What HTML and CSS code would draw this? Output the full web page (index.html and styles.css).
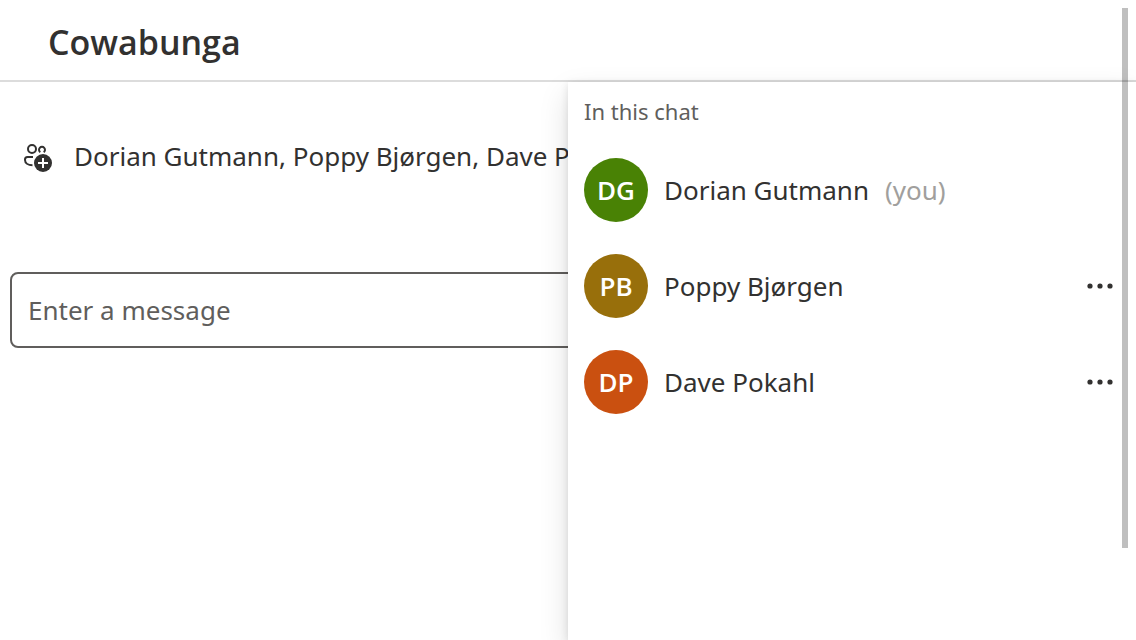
FILE: index.html
```
<!DOCTYPE html>
<html lang="en">
<head>
<meta charset="utf-8">
<meta name="viewport" content="width=device-width, initial-scale=1">
<title>Cowabunga</title>
<link rel="stylesheet" href="styles.css">
</head>
<body>
<div class="app">
  <header class="header">
    <h1 class="title">Cowabunga</h1>
  </header>
  <div class="body">
    <main class="chat">
      <div class="notice">
        <svg class="notice-icon" viewBox="0 0 28 28" aria-hidden="true">
          <g fill="none" stroke="#323130" stroke-width="2">
            <circle cx="8" cy="5" r="4"/>
            <path d="M16.300 8.300A3 3 0 1 1 19.700 8.300"/>
            <path d="M9 13H3.500A2.500 2.500 0 0 0 1 15.500V16C1 19 4 21.200 8.500 21.200"/>
          </g>
          <circle cx="19" cy="19" r="9" fill="#323130"/>
          <path d="M19 14V24M14 19H24" fill="none" stroke="#fff" stroke-width="2"/>
        </svg>
        <p class="notice-text">Dorian Gutmann, Poppy Bjørgen, Dave Pokahl</p>
      </div>
      <form class="composer">
        <input class="message" type="text" placeholder="Enter a message" aria-label="Enter a message">
      </form>
    </main>
    <aside class="people" aria-label="In this chat">
      <h2 class="people-title">In this chat</h2>
      <ul class="list">
        <li class="person">
          <span class="avatar green">DG</span>
          <span class="name">Dorian Gutmann</span>
          <span class="you">(you)</span>
        </li>
        <li class="person">
          <span class="avatar gold">PB</span>
          <span class="name">Poppy Bjørgen</span>
          <button class="more" type="button" aria-label="More options for Poppy Bjørgen">
            <svg class="dots" viewBox="0 0 28 6" aria-hidden="true"><circle cx="4" cy="3" r="2.6"/><circle cx="14" cy="3" r="2.6"/><circle cx="24" cy="3" r="2.6"/></svg>
          </button>
        </li>
        <li class="person">
          <span class="avatar orange">DP</span>
          <span class="name">Dave Pokahl</span>
          <button class="more" type="button" aria-label="More options for Dave Pokahl">
            <svg class="dots" viewBox="0 0 28 6" aria-hidden="true"><circle cx="4" cy="3" r="2.6"/><circle cx="14" cy="3" r="2.6"/><circle cx="24" cy="3" r="2.6"/></svg>
          </button>
        </li>
      </ul>
    </aside>
  </div>
  <div class="scrollbar"></div>
</div>
</body>
</html>
```
FILE: styles.css
```
* {
  box-sizing: border-box;
}

body {
  margin: 0;
  background: #fff;
  color: #323130;
  font-family: "Segoe UI", "Noto Sans", "Open Sans", sans-serif;
  font-size: 26px;
  line-height: 36px;
}

.app {
  position: relative;
  display: flex;
  flex-direction: column;
  min-height: 100vh;
  overflow: hidden;
}

.header {
  padding: 18px 48px 14px;
  border-bottom: 2px solid #dcdcdc;
}

.title {
  margin: 0;
  font-family: "Segoe UI", "Open Sans", sans-serif;
  font-size: 34px;
  line-height: 48px;
  font-weight: 600;
}

.body {
  position: relative;
  flex: 1;
}

.chat {
  display: flex;
  flex-direction: column;
  gap: 98px;
  padding: 56px 10px;
}

.notice {
  display: flex;
  align-items: flex-end;
  gap: 22px;
  padding-left: 14px;
}

.notice-icon {
  flex: none;
  width: 28px;
  height: 28px;
  margin-bottom: 2px;
}

.notice-text {
  margin: 0;
  white-space: nowrap;
}

.message {
  display: block;
  width: 100%;
  height: 76px;
  padding: 0 16px;
  border: 2px solid #605e5c;
  border-radius: 8px;
  background: #fff;
  color: #323130;
  font: inherit;
}

.message::placeholder {
  color: #605e5c;
  opacity: 1;
}

.people {
  position: absolute;
  inset: 0 0 0 50%;
  background: #fff;
  box-shadow: 0 12px 28px rgba(0, 0, 0, 0.13), 0 2px 8px rgba(0, 0, 0, 0.11);
}

.people-title {
  margin: 0;
  padding: 11px 16px 13px;
  color: #605e5c;
  font-size: 22px;
  line-height: 36px;
  font-weight: 400;
}

.list {
  margin: 0;
  padding: 0;
  list-style: none;
}

.person {
  display: flex;
  align-items: center;
  gap: 16px;
  height: 96px;
  padding: 0 16px;
}

.avatar {
  flex: none;
  width: 64px;
  height: 64px;
  border-radius: 50%;
  color: #fff;
  font-family: "Segoe UI", "Open Sans", sans-serif;
  font-weight: 600;
  line-height: 64px;
  text-align: center;
}

.green {
  background: #498205;
}

.gold {
  background: #986f0b;
}

.orange {
  background: #ca5010;
}

.you {
  color: #a19f9d;
}

.more {
  display: flex;
  margin-left: auto;
  margin-right: 6px;
  padding: 16px 0;
  border: 0;
  background: none;
}

.dots {
  width: 28px;
  height: 6px;
  fill: #323130;
}

.scrollbar {
  position: absolute;
  top: 8px;
  right: 8px;
  width: 6px;
  height: 540px;
  background: rgba(0, 0, 0, 0.25);
}
```
